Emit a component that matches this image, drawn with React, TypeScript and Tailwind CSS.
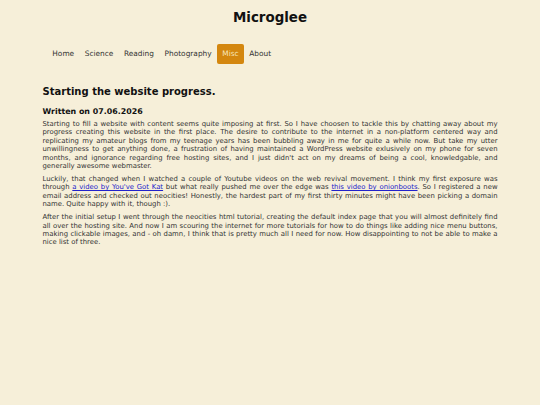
const navItems = ['Home', 'Science', 'Reading', 'Photography', 'Misc', 'About'];

const App = () => {
  return (
    <div className="min-h-screen bg-[#f6efd9] font-['DejaVu_Sans',sans-serif] text-[#333]">
      <div className="mx-auto w-[455px]">
        <h1 className="pt-[10px] text-center text-[13.4px] font-bold leading-[16px] text-[#111]">
          Microglee
        </h1>

        <nav className="mt-[18px] pl-[4.5px]">
          <ul className="flex">
            {navItems.map((item) => (
              <li key={item}>
                <a
                  href="#"
                  className={
                    item === 'Misc'
                      ? 'flex h-[20px] items-center rounded-[2px] bg-[#d4870f] px-[5.3px] text-[7.4px] text-[#f7e6bd]'
                      : 'flex h-[20px] items-center px-[5.3px] text-[7.4px] text-[#333]'
                  }
                >
                  {item}
                </a>
              </li>
            ))}
          </ul>
        </nav>

        <h2 className="mt-[22px] text-[10px] font-bold leading-[12px] text-[#111]">
          Starting the website progress.
        </h2>
        <h3 className="mt-[9px] text-[7.9px] font-bold leading-[10px] text-[#111]">
          Written on 07.06.2026
        </h3>

        <div className="mt-[3px] space-y-[4.6px] text-justify text-[6.88px] leading-[8.4px]">
          <p>
            Starting to fill a website with content seems quite imposing at first. So I have choosen to tackle this by
            chatting away about my progress creating this website in the first place. The desire to contribute to the
            internet in a non-platform centered way and replicating my amateur blogs from my teenage years has been
            bubbling away in me for quite a while now. But take my utter unwillingness to get anything done, a
            frustration of having maintained a WordPress website exlusively on my phone for seven months, and ignorance
            regarding free hosting sites, and I just didn't act on my dreams of being a cool, knowledgable, and
            generally awesome webmaster.
          </p>
          <p>
            Luckily, that changed when I watched a couple of Youtube videos on the web revival movement. I think my
            first exposure was through{' '}
            <a href="#" className="text-[#2222cc] underline">
              a video by You've Got Kat
            </a>{' '}
            but what really pushed me over the edge was{' '}
            <a href="#" className="text-[#2222cc] underline">
              this video by onionboots
            </a>
            . So I registered a new email address and checked out neocities! Honestly, the hardest part of my first
            thirty minutes might have been picking a domain name. Quite happy with it, though :).
          </p>
          <p>
            After the initial setup I went through the neocities html tutorial, creating the default index page that
            you will almost definitely find all over the hosting site. And now I am scouring the internet for more
            tutorials for how to do things like adding nice menu buttons, making clickable images, and - oh damn, I
            think that is pretty much all I need for now. How disappointing to not be able to make a nice list of
            three.
          </p>
        </div>
      </div>
    </div>
  );
};

export default App;
